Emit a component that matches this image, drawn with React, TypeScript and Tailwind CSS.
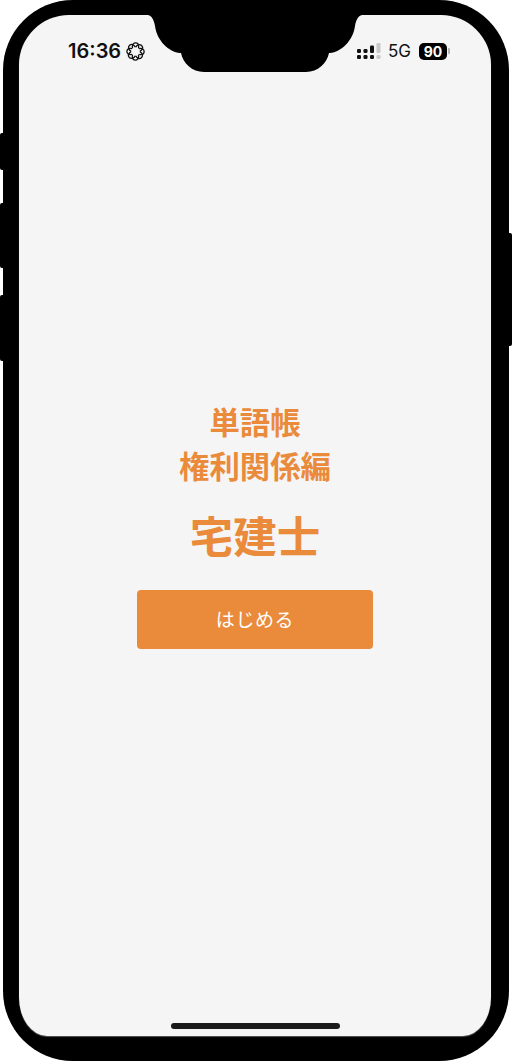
import React from 'react';

const jp = { fontFamily: '"Noto Sans CJK JP", sans-serif' };

function SideButtons() {
  return (
    <>
      <div className="absolute left-0 top-[133px] h-[37px] w-[4px] rounded-l-[2px] bg-black" />
      <div className="absolute left-0 top-[203px] h-[65px] w-[4px] rounded-l-[2px] bg-black" />
      <div className="absolute left-0 top-[295px] h-[66px] w-[4px] rounded-l-[2px] bg-black" />
      <div className="absolute right-0 top-[233px] h-[113px] w-[4px] rounded-r-[2px] bg-black" />
    </>
  );
}

function Notch() {
  return (
    <svg className="absolute left-[146px] top-[14px]" width="218" height="59" viewBox="0 0 218 59">
      <path
        fill="#000"
        d="M0 0 L218 0 L218 1 L216 1 C212 2 210 6 209 12 C207 27 195 38 184 39 L183 39 C181 49 172 58 160 58 L58 58 C46 58 37 49 35 39 L34 39 C23 38 11 27 9 12 C8 6 6 2 2 1 L0 1 Z"
      />
    </svg>
  );
}

function FlowerIcon() {
  return (
    <svg width="19" height="19" viewBox="0 0 19 19" fill="none" stroke="#111" strokeWidth="1.3">
      {[0, 45, 90, 135, 180, 225, 270, 315].map((a) => (
        <ellipse key={a} cx="9.5" cy="4.5" rx="3.2" ry="3.6" transform={`rotate(${a} 9.5 9.5)`} />
      ))}
      <circle cx="9.5" cy="9.5" r="4.3" fill="#f5f5f5" stroke="none" />
    </svg>
  );
}

function SignalIcon() {
  return (
    <svg width="24" height="17" viewBox="0 0 24 17">
      <rect x="0" y="6" width="4" height="4" rx="1.2" fill="#111" />
      <rect x="0" y="12" width="4" height="4" rx="1.2" fill="#111" />
      <rect x="6.5" y="6" width="4" height="4" rx="1.2" fill="#111" />
      <rect x="6.5" y="12" width="4" height="4" rx="1.2" fill="#111" />
      <rect x="13" y="2.5" width="4" height="7.5" rx="1.2" fill="#111" />
      <rect x="13" y="12" width="4" height="4" rx="1.2" fill="#111" />
      <rect x="19.5" y="0" width="4" height="10" rx="1.2" fill="#c8c8c8" />
      <rect x="19.5" y="12" width="4" height="4" rx="1.2" fill="#c8c8c8" />
    </svg>
  );
}

function StatusBar() {
  return (
    <div className="flex h-[48px] items-end justify-between pl-[49px] pr-[41px]">
      <div className="flex items-center gap-[5px]">
        <span className="text-[20px] leading-[24px] font-semibold text-[#111]" style={{ fontFamily: 'Inter, sans-serif' }}>
          16:36
        </span>
        <FlowerIcon />
      </div>
      <div className="flex items-center">
        <SignalIcon />
        <span className="ml-[7px] text-[17px] leading-[24px] text-[#111]" style={{ fontFamily: 'Inter, sans-serif' }}>
          5G
        </span>
        <div className="ml-[8px] flex h-[17px] w-[28px] items-center justify-center rounded-[5px] bg-black text-[14px] leading-[17px] font-bold text-white" style={{ fontFamily: 'Inter, sans-serif' }}>
          90
        </div>
        <div className="ml-[1px] h-[6px] w-[2px] rounded-r-[1px] bg-[#b5b5b5]" />
      </div>
    </div>
  );
}

export default function App() {
  return (
    <div className="relative h-[1062px] w-[512px] overflow-hidden bg-white" style={jp}>
      <SideButtons />
      <div className="mx-[3px] h-[1061px] rounded-[70px] bg-black pb-[25px] pl-[16px] pr-[18px] pt-[15px]">
        <div className="flex h-full flex-col rounded-t-[50px] rounded-bl-[28px_39px] rounded-br-[28px_39px] bg-[#f5f5f5] shadow-[0_1px_1px_#555]">
          <StatusBar />
          <main className="flex flex-1 flex-col items-center pt-[336px] text-[#ea8b3c]">
            <h2 className="text-[30.4px] leading-[44px] font-semibold">単語帳</h2>
            <h2 className="text-[30.4px] leading-[44px] font-semibold">権利関係編</h2>
            <h1 className="mt-[18px] text-[43.5px] leading-[60px] font-semibold">宅建士</h1>
            <button className="mt-[25px] h-[59px] w-[236px] rounded-[4px] bg-[#ea8b3c] text-[19px] tracking-[0.6px] text-white">
              はじめる
            </button>
          </main>
          <div className="mx-auto mb-[7px] h-[6px] w-[169px] rounded-full bg-[#1a1a1a]" />
        </div>
      </div>
      <Notch />
    </div>
  );
}
